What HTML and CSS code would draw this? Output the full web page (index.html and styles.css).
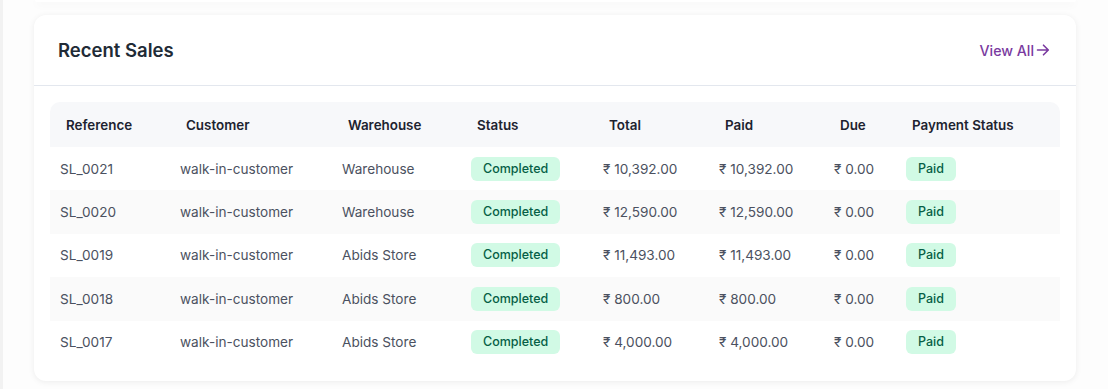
FILE: index.html
```html
<!DOCTYPE html>
<html lang="en">
<head>
<meta charset="utf-8">
<title>Recent Sales</title>
<link rel="stylesheet" href="styles.css">
</head>
<body>
<div class="page">
  <div class="prev-card"></div>
  <section class="card">
    <header class="card-head">
      <h2 class="card-title">Recent Sales</h2>
      <a class="view-all" href="#">View All<svg class="arrow" viewBox="0 0 16 16" width="16" height="16" aria-hidden="true"><path d="M2.5 8h10.5M8.5 3.2 13.3 8l-4.8 4.8" fill="none" stroke="currentColor" stroke-width="1.6" stroke-linecap="round" stroke-linejoin="round"/></svg></a>
    </header>
    <div class="card-body">
      <table class="sales">
        <colgroup>
          <col class="c-ref"><col class="c-cust"><col class="c-wh"><col class="c-status"><col class="c-total"><col class="c-paid"><col class="c-due"><col class="c-pay">
        </colgroup>
        <thead>
          <tr>
            <th>Reference</th><th>Customer</th><th>Warehouse</th><th>Status</th><th>Total</th><th>Paid</th><th>Due</th><th>Payment Status</th>
          </tr>
        </thead>
        <tbody>
          <tr><td>SL_0021</td><td>walk-in-customer</td><td>Warehouse</td><td><span class="badge badge-done">Completed</span></td><td>₹ 10,392.00</td><td>₹ 10,392.00</td><td>₹ 0.00</td><td><span class="badge badge-paid">Paid</span></td></tr>
          <tr><td>SL_0020</td><td>walk-in-customer</td><td>Warehouse</td><td><span class="badge badge-done">Completed</span></td><td>₹ 12,590.00</td><td>₹ 12,590.00</td><td>₹ 0.00</td><td><span class="badge badge-paid">Paid</span></td></tr>
          <tr><td>SL_0019</td><td>walk-in-customer</td><td>Abids Store</td><td><span class="badge badge-done">Completed</span></td><td>₹ 11,493.00</td><td>₹ 11,493.00</td><td>₹ 0.00</td><td><span class="badge badge-paid">Paid</span></td></tr>
          <tr><td>SL_0018</td><td>walk-in-customer</td><td>Abids Store</td><td><span class="badge badge-done">Completed</span></td><td>₹ 800.00</td><td>₹ 800.00</td><td>₹ 0.00</td><td><span class="badge badge-paid">Paid</span></td></tr>
          <tr><td>SL_0017</td><td>walk-in-customer</td><td>Abids Store</td><td><span class="badge badge-done">Completed</span></td><td>₹ 4,000.00</td><td>₹ 4,000.00</td><td>₹ 0.00</td><td><span class="badge badge-paid">Paid</span></td></tr>
        </tbody>
      </table>
    </div>
  </section>
</div>
</body>
</html>
```
FILE: styles.css
```css
* { box-sizing: border-box; }
html, body { margin: 0; padding: 0; }
body {
  background: #fdfdfd;
  font-family: Inter, "Noto Sans", "Liberation Sans", sans-serif;
  color: #4b5563;
}
.page {
  min-height: 389px;
  padding: 0 32px 0 34px;
  border-left: 3px solid #f2f2f2;
}
.prev-card {
  height: 2px;
  margin: 0 0 13px -2px;
  background: #fff;
  border-radius: 0 0 12px 12px;
  box-shadow: 0 2px 8px rgba(0,0,0,0.07);
}
.card {
  width: 1042px;
  margin-left: -3px;
  margin-top: 1px;
  background: #fff;
  border-radius: 12px;
  box-shadow: 0 1px 6px rgba(0,0,0,0.07);
}
.card-head {
  height: 71px;
  display: flex;
  align-items: center;
  justify-content: space-between;
  padding: 0 25px 0 24px;
  border-bottom: 1px solid #e3e7ee;
}
.card-title {
  margin: 0;
  font-size: 18.5px;
  font-weight: 600;
  color: #212b36;
}
.view-all {
  display: flex;
  align-items: center;
  font-size: 14.2px;
  font-weight: 500;
  color: #7a3aa0;
  text-decoration: none;
}
.arrow { width: 16px; height: 16px; margin-left: 1px; }
.card-body {
  padding: 16px 16px 17px;
}
.sales {
  width: 100%;
  border-collapse: separate;
  border-spacing: 0;
  font-size: 13.6px;
  table-layout: fixed;
}
.c-ref { width: 120px; }
.c-cust { width: 162px; }
.c-wh { width: 129px; }
.c-status { width: 132px; }
.c-total { width: 116px; }
.c-paid { width: 115px; }
.c-due { width: 72px; }
.c-pay { width: 164px; }
.sales thead th {
  height: 45px;
  background: #f7f8fa;
  text-align: left;
  font-size: 13.4px;
  font-weight: 600;
  color: #1d2330;
  padding: 0 0 0 16px;
  white-space: nowrap;
}
.sales thead th:first-child { border-top-left-radius: 10px; }
.sales thead th:last-child { border-top-right-radius: 10px; }
.sales tbody td {
  height: 43.4px;
  padding: 0 0 0 10px;
  color: #4b5160;
  white-space: nowrap;
  vertical-align: middle;
}
.sales tbody tr:nth-child(even) td { background: #fafafa; }
.badge {
  display: inline-block;
  height: 24px;
  line-height: 24px;
  border-radius: 6px;
  font-size: 12.5px;
  font-weight: 500;
  background: #d1fae5;
  color: #065f46;
}
.badge-done { padding: 0 12px; }
.badge-paid { padding: 0 12px; }
```
